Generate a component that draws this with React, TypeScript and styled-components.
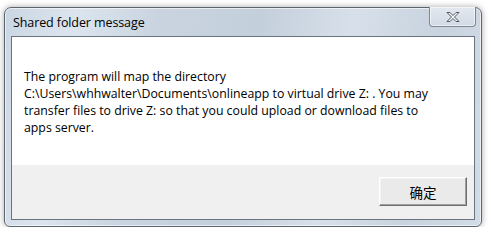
import React from 'react'
import styled, { createGlobalStyle } from 'styled-components'

const Global = createGlobalStyle`
  html, body {
    margin: 0;
    padding: 0;
    background: #ffffff;
  }
  body {
    font-family: "Segoe UI", "Noto Sans", "Noto Sans CJK SC", sans-serif;
  }
`

const Frame = styled.div`
  box-sizing: border-box;
  margin: 7px 0 0 4px;
  width: 478px;
  height: 220px;
  border: 1px solid #5c6670;
  border-radius: 7px 7px 6px 6px;
  background: linear-gradient(100deg, #cad6e3 0%, #dce5ee 14%, #c9d4e0 30%, #c4cfdc 50%, #d7e0ea 68%, #c8d3df 85%, #d2dce7 100%);
  box-shadow: 0 0 6px rgba(0, 0, 0, 0.35), inset 0 0 0 1px rgba(255, 255, 255, 0.6);
  display: flex;
  flex-direction: column;
  padding: 0 6px 6px 6px;
`

const TitleBar = styled.div`
  height: 28px;
  display: flex;
  align-items: flex-start;
  justify-content: space-between;
`

const Title = styled.div`
  padding: 6px 0 0 2px;
  font-family: "Open Sans", "Noto Sans", sans-serif;
  font-size: 12.5px;
  color: #000;
  letter-spacing: -0.1px;
`

const CloseButton = styled.div`
  box-sizing: border-box;
  width: 47px;
  height: 20px;
  margin-top: -1px;
  margin-right: -1px;
  border: 1px solid #7d8894;
  border-top: none;
  border-radius: 0 0 4px 4px;
  background: linear-gradient(#e3e9f0, #d2dae4);
  box-shadow: inset 0 0 0 1px rgba(255, 255, 255, 0.55);
  display: flex;
  align-items: center;
  justify-content: center;
`

const Client = styled.div`
  flex: 1;
  border: 1px solid #6a747e;
  display: flex;
  flex-direction: column;
  background: #f0f0f0;
`

const MessageArea = styled.div`
  background: #ffffff;
  height: 128px;
  box-sizing: border-box;
  padding: 31px 12px 0 12px;
`

const Message = styled.p`
  margin: 0;
  font-family: "Open Sans", "Noto Sans", sans-serif;
  font-size: 12.3px;
  line-height: 17px;
  color: #000;
`

const ButtonRow = styled.div`
  flex: 1;
  display: flex;
  justify-content: flex-end;
  align-items: flex-start;
  padding: 12px 7px 0 0;
`

const Button = styled.button`
  box-sizing: border-box;
  width: 88px;
  height: 29px;
  background: #eaeaea;
  border: 1px solid;
  border-color: #ffffff #6e6e6e #6e6e6e #ffffff;
  box-shadow: inset -1px -1px 0 #a0a0a0, inset 1px 1px 0 #f4f4f4;
  font-family: "Noto Sans CJK SC", sans-serif;
  font-size: 13.5px;
  color: #000;
  padding: 0;
`

const CloseIcon = () => (
  <svg width="16" height="12" viewBox="0 0 16 12">
    <path
      d="M2 1.5 L5 1.5 L8 4.5 L11 1.5 L14 1.5 L9.5 6 L14 10.5 L11 10.5 L8 7.5 L5 10.5 L2 10.5 L6.5 6 Z"
      fill="#f6f8fa"
      stroke="#4f5864"
      strokeWidth="1"
      strokeLinejoin="round"
    />
  </svg>
)

const App = () => {
  return (
    <>
      <Global />
      <Frame>
        <TitleBar>
          <Title>Shared folder message</Title>
          <CloseButton>
            <CloseIcon />
          </CloseButton>
        </TitleBar>
        <Client>
          <MessageArea>
            <Message>
              The program will map the directory
              <br />
              C:\Users\whhwalter\Documents\onlineapp to virtual drive Z: . You may
              <br />
              transfer files to drive Z: so that you could upload or download files to
              <br />
              apps server.
            </Message>
          </MessageArea>
          <ButtonRow>
            <Button>确定</Button>
          </ButtonRow>
        </Client>
      </Frame>
    </>
  )
}

export default App
